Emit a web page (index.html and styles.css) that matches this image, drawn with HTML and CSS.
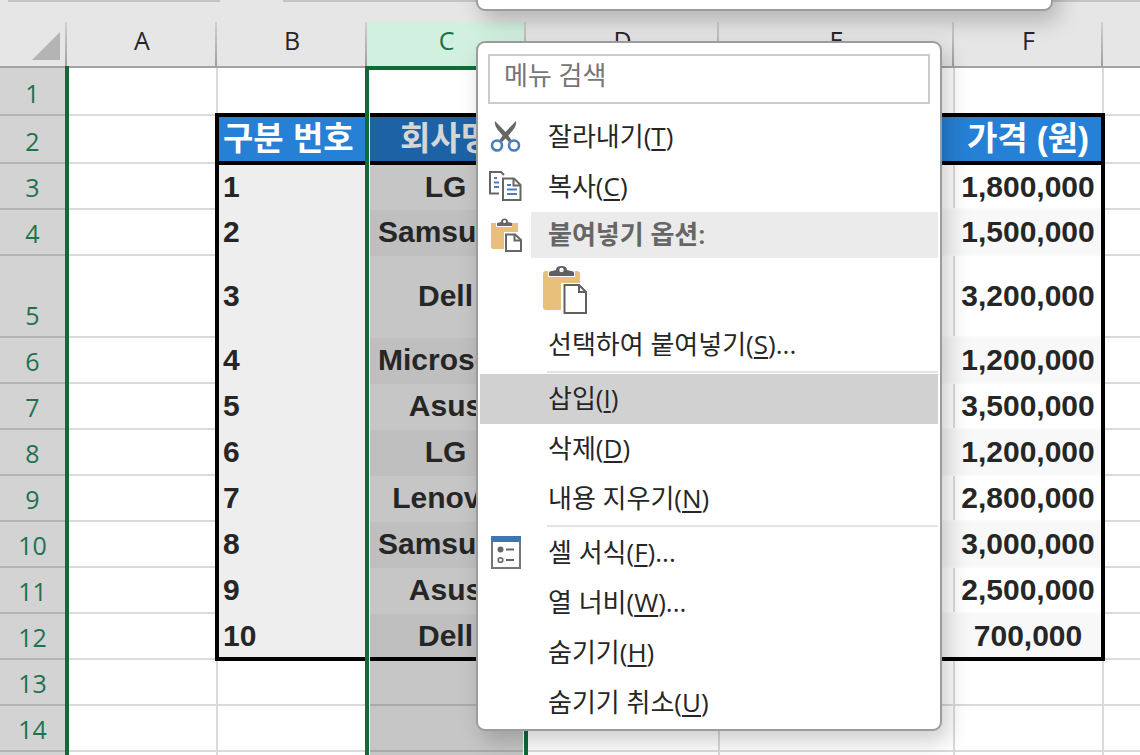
FILE: index.html
```html
<!DOCTYPE html>
<html lang="ko">
<head>
  <meta charset="UTF-8" />
  <meta name="viewport" content="width=device-width, initial-scale=1.0" />
  <title>통합 문서</title>
  <link rel="stylesheet" href="styles.css">
</head>
<body>
  <main class="window">
    <!-- Bottom edge of the name box and the formula bar -->
    <div class="formula-row">
      <div class="name-box"></div>
      <div class="formula-bar"></div>
    </div>

    <!-- Sheet -->
    <table class="sheet">
      <colgroup>
        <col class="col-head">
        <col class="col-a">
        <col class="col-b">
        <col class="col-c">
        <col class="col-d">
        <col class="col-e">
        <col class="col-f">
        <col>
      </colgroup>
      <thead>
        <tr>
          <th class="corner">
            <svg width="28" height="28" viewBox="0 0 28 28"><path d="M28 0V28H0Z" fill="#b4b4b4"/></svg>
          </th>
          <th>A</th>
          <th>B</th>
          <th class="selected">C</th>
          <th>D</th>
          <th>E</th>
          <th>F</th>
          <th></th>
        </tr>
      </thead>
      <tbody>
        <tr class="tall">
          <th>1</th><td></td><td></td>
          <td class="active"><div class="selection"></div></td>
          <td></td><td></td><td></td><td></td>
        </tr>
        <tr class="data title tall">
          <th>2</th><td></td><td>구분 번호</td><td>회사명</td><td></td><td></td><td>가격 (원)</td><td></td>
        </tr>
        <tr class="data">
          <th>3</th><td></td><td>1</td><td>LG</td><td></td><td></td><td>1,800,000</td><td></td>
        </tr>
        <tr class="data band">
          <th>4</th><td></td><td>2</td><td>Samsung</td><td></td><td></td><td>1,500,000</td><td></td>
        </tr>
        <tr class="data double">
          <th>5</th><td></td><td>3</td><td>Dell</td><td></td><td></td><td>3,200,000</td><td></td>
        </tr>
        <tr class="data band">
          <th>6</th><td></td><td>4</td><td>Microsoft</td><td></td><td></td><td>1,200,000</td><td></td>
        </tr>
        <tr class="data">
          <th>7</th><td></td><td>5</td><td>Asus</td><td></td><td></td><td>3,500,000</td><td></td>
        </tr>
        <tr class="data band">
          <th>8</th><td></td><td>6</td><td>LG</td><td></td><td></td><td>1,200,000</td><td></td>
        </tr>
        <tr class="data">
          <th>9</th><td></td><td>7</td><td>Lenovo</td><td></td><td></td><td>2,800,000</td><td></td>
        </tr>
        <tr class="data band">
          <th>10</th><td></td><td>8</td><td>Samsung</td><td></td><td></td><td>3,000,000</td><td></td>
        </tr>
        <tr class="data">
          <th>11</th><td></td><td>9</td><td>Asus</td><td></td><td></td><td>2,500,000</td><td></td>
        </tr>
        <tr class="data band last">
          <th>12</th><td></td><td>10</td><td>Dell</td><td></td><td></td><td>700,000</td><td></td>
        </tr>
        <tr class="empty">
          <th>13</th><td></td><td></td><td></td><td></td><td></td><td></td><td></td>
        </tr>
        <tr class="empty">
          <th>14</th><td></td><td></td><td></td><td></td><td></td><td></td><td></td>
        </tr>
        <tr class="empty">
          <th></th><td></td><td></td><td></td><td></td><td></td><td></td><td></td>
        </tr>
      </tbody>
    </table>

    <!-- Mini toolbar -->
    <div class="mini-toolbar"></div>

    <!-- Context menu -->
    <div class="menu" role="menu">
      <input class="menu-search" type="text" placeholder="메뉴 검색" aria-label="메뉴 검색">

      <button class="item" role="menuitem">
        <svg class="icon" viewBox="0 0 32 32" fill="none">
          <path d="M5 1C4 6 8 10 12 15L19 22L21.500 20L16 12.500Z" fill="#666"/>
          <path d="M26 1C27 6 23 10 19 15L12 22L9.500 20L15 12.500Z" fill="#666"/>
          <circle cx="7" cy="25.500" r="5" stroke="#4a7ebb" stroke-width="2.600"/>
          <circle cx="24" cy="25.500" r="5" stroke="#4a7ebb" stroke-width="2.600"/>
        </svg>
        <span>잘라내기(<u>T</u>)</span>
      </button>

      <button class="item" role="menuitem">
        <svg class="icon" viewBox="0 0 32 32" fill="none">
          <path d="M9 23.500H0V2H11L14 5" stroke="#666" stroke-width="2"/>
          <path d="M4 8H7M4 12.500H9M4 17H9" stroke="#4a7ebb" stroke-width="2"/>
          <path d="M13 8.500H24L30.500 15V30H13Z" fill="#fff" stroke="#666" stroke-width="2"/>
          <path d="M23.500 9V15.500H30" stroke="#666" stroke-width="2"/>
          <path d="M17 15H21M17 19.500H27M17 24H27" stroke="#4a7ebb" stroke-width="2"/>
        </svg>
        <span>복사(<u>C</u>)</span>
      </button>

      <div class="item heading">
        <svg class="icon" viewBox="0 0 32 32" fill="none">
          <path d="M1 5H6V9H22V5H28V14H14V31H3Q1 31 1 29Z" fill="#e9bf7c"/>
          <path d="M7 8V5L11 4Q11 0.500 14.500 0.500T18 4L22 5V8Z" fill="#666"/>
          <circle cx="14.500" cy="3.500" r="1.500" fill="#fff"/>
          <path d="M16 16.500H25L31 22V33H16Z" fill="#fff" stroke="#666" stroke-width="2"/>
          <path d="M24.500 17V22.500H31" stroke="#666" stroke-width="2"/>
        </svg>
        <span>붙여넣기 옵션:</span>
      </div>

      <div class="paste-options">
        <button class="paste" role="menuitem" aria-label="붙여넣기">
          <svg width="46" height="50" viewBox="0 0 46 50" fill="none">
            <path d="M1 9Q1 6 4 6H6V12H33V6H35Q38 6 38 9V18H19V45H4Q1 45 1 42Z" fill="#e9bf7c"/>
            <path d="M7 11V8Q7 6 10 6L14 5Q14 1 19.500 1T25 5L29 6Q32 6 32 8V11Z" fill="#606060"/>
            <circle cx="19.500" cy="5" r="2.200" fill="#fff"/>
            <path d="M22.500 20H37L44 27V48H22.500Z" fill="#fff" stroke="#606060" stroke-width="2"/>
            <path d="M37 20V27H44" stroke="#606060" stroke-width="2"/>
          </svg>
        </button>
      </div>

      <button class="item" role="menuitem"><span>선택하여 붙여넣기(<u>S</u>)...</span></button>
      <hr>
      <button class="item hover" role="menuitem"><span>삽입(<u>I</u>)</span></button>
      <button class="item" role="menuitem"><span>삭제(<u>D</u>)</span></button>
      <button class="item" role="menuitem"><span>내용 지우기(<u>N</u>)</span></button>
      <hr>
      <button class="item" role="menuitem">
        <svg class="icon" viewBox="0 0 32 32" fill="none">
          <rect x="2" y="1" width="28" height="31" fill="#fff" stroke="#777" stroke-width="2"/>
          <path d="M1 0H31V6H1Z" fill="#3f74b5"/>
          <circle cx="10.500" cy="13.500" r="3" fill="#666"/>
          <circle cx="10.500" cy="24" r="2.300" stroke="#666" stroke-width="1.600"/>
          <path d="M16 13.500H24M16 24H24" stroke="#666" stroke-width="2"/>
        </svg>
        <span>셀 서식(<u>F</u>)...</span>
      </button>
      <button class="item" role="menuitem"><span>열 너비(<u>W</u>)...</span></button>
      <button class="item" role="menuitem"><span>숨기기(<u>H</u>)</span></button>
      <button class="item" role="menuitem"><span>숨기기 취소(<u>U</u>)</span></button>
    </div>
  </main>
</body>
</html>
```

FILE: styles.css
```css
/* Root Variables */
:root {
  --chrome: #e6e6e6;
  --grid: #dadada;
  --green: #0f6b38;
  --blue: #2680d6;
  --blue-dark: #1e62a6;
  --menu-border: #9c9c9c;
  --ui-font: "Open Sans", "Noto Sans CJK KR", sans-serif;
  --cell-font: "Liberation Sans", "Noto Sans CJK KR", sans-serif;
}

* {
  margin: 0;
  padding: 0;
  box-sizing: border-box;
}
body {
  font-family: var(--ui-font);
  background: #fff;
  color: #262626;
}

.window {
  position: relative;
  height: 100vh;
  overflow: hidden;
}

/* Formula row */
.formula-row {
  display: flex;
  gap: 63px;
  height: 22px;
  padding-left: 8px;
  background: var(--chrome);
}
.name-box,
.formula-bar {
  height: 2px;
  background: #c4c4c4;
}
.name-box {
  width: 212px;
}
.formula-bar {
  flex: 1;
}

/* Sheet */
.sheet {
  width: 100%;
  table-layout: fixed;
  border-collapse: collapse;
}
.col-head { width: 67px; }
.col-a { width: 150px; }
.col-b { width: 150px; }
.col-c { width: 159px; }
.col-d { width: 193px; }
.col-e { width: 235px; }
.col-f { width: 149px; }

.sheet tr {
  height: 46px;
}
.sheet thead tr {
  height: 45px;
}
.sheet tr.tall {
  height: 48px;
}
.sheet tr.double {
  height: 82px;
}
.sheet th {
  font-size: 25px;
  font-weight: 400;
  line-height: 36px;
}
.sheet thead th {
  padding-bottom: 8px;
  border-bottom: 2px solid #a3a3a3;
  background: linear-gradient(#d0d0d0, #9f9f9f) right / 2px 100% no-repeat var(--chrome);
}
.sheet thead th:last-child {
  background: var(--chrome);
}
.sheet thead th.selected {
  background-color: #d2f0e0;
  color: #1d7048;
}
.sheet thead th.corner {
  padding: 0 7px 6px 0;
  text-align: right;
  vertical-align: bottom;
}
.corner svg {
  display: block;
  margin-left: auto;
}
.sheet tbody th {
  border-right: 4px solid var(--green);
  border-bottom: 2px solid #b4b4b4;
  background: #d3d3d3;
  color: #1f7250;
  line-height: 42px;
  vertical-align: bottom;
}
.sheet td {
  border: 2px solid var(--grid);
  font-family: var(--cell-font);
  font-size: 30px;
  font-weight: 700;
  line-height: 40px;
  text-align: center;
  white-space: nowrap;
}
.sheet td:last-child {
  border-right: none;
}

/* Filled block B2:F12 */
.data td:nth-child(3) {
  padding-left: 4px;
  border-color: #eee;
  border-left: 4px solid #000;
  background: #eee;
  text-align: left;
}
.data td:nth-child(4) {
  padding-right: 2px;
  border-color: #c6c6c6;
  background: #c6c6c6;
}
.data td:nth-child(5),
.data td:nth-child(6),
.data td:nth-child(7) {
  border-bottom-color: #fafafa;
}
.data td:nth-child(7) {
  border-right: 4px solid #000;
}
.band td:nth-child(4) {
  border-color: #bfbfbf;
  background: #bfbfbf;
}
.band td:nth-child(5),
.band td:nth-child(6),
.band td:nth-child(7) {
  border-left-color: #f8f8f8;
  background: #f8f8f8;
}
.band td:nth-child(5),
.band td:nth-child(6) {
  border-right-color: #f8f8f8;
}
.title td:nth-child(n+3):nth-child(-n+7) {
  border-top: 4px solid #000;
  border-bottom: 4px solid #000;
  border-right-color: var(--blue);
  background: var(--blue);
  color: #fff;
  font-size: 33px;
}
.title td:nth-child(n+4):nth-child(-n+4) {
  background: var(--blue-dark);
  color: #d6d6d6;
}
.title td:nth-child(n+3):nth-child(-n+4) {
  border-right-color: var(--blue-dark);
}
.title td:nth-child(n+7):nth-child(-n+7) {
  border-right-color: #000;
}
.last td:nth-child(n+3):nth-child(-n+7) {
  border-bottom: 4px solid #000;
}
.empty td:nth-child(4) {
  border-color: #aaa;
  background: #c6c6c6;
}

/* Outline of the selected column */
.active {
  position: relative;
}
.selection {
  position: absolute;
  top: -2px;
  left: -3px;
  right: -3px;
  height: 100vh;
  border: 4px solid var(--green);
  box-shadow: inset 0 0 0 1px #fff;
}

/* Mini toolbar */
.mini-toolbar {
  position: absolute;
  top: -40px;
  left: 476px;
  width: 577px;
  height: 51px;
  border: 2px solid var(--menu-border);
  border-radius: 9px;
  background: #fff;
  box-shadow: 6px 10px 22px rgba(0, 0, 0, 0.22);
}

/* Context menu */
.menu {
  position: absolute;
  top: 41px;
  left: 476px;
  width: 466px;
  padding: 11px 2px 1px;
  border: 2px solid var(--menu-border);
  border-radius: 9px;
  background: #fff;
  box-shadow: 6px 10px 22px rgba(0, 0, 0, 0.2);
}
.menu-search {
  display: block;
  width: calc(100% - 16px);
  height: 50px;
  margin: 0 8px 8px;
  padding: 0 14px 8px;
  border: 2px solid #ccc;
  background: #fff;
  font-family: var(--ui-font);
  font-size: 26px;
}
.menu-search::placeholder {
  color: #767676;
  opacity: 1;
}
.item {
  display: flex;
  align-items: center;
  width: 100%;
  height: 50px;
  padding: 0 0 2px 68px;
  border: none;
  background: none;
  color: #262626;
  font-family: var(--ui-font);
  font-size: 26px;
  line-height: 36px;
  text-align: left;
  white-space: nowrap;
}
.item u {
  text-underline-offset: 3px;
}
.item.hover {
  background: #d1d1d1;
}
.icon {
  flex: none;
  width: 32px;
  height: 32px;
  margin-left: -58px;
  margin-right: 26px;
  overflow: visible;
}
.heading {
  height: 46px;
  background: linear-gradient(#ebebeb, #ebebeb) right / calc(100% - 51px) 100% no-repeat;
  color: #666;
  font-weight: 600;
}
.paste-options {
  display: flex;
  height: 62px;
  padding: 7px 0 0 62px;
}
.paste {
  width: 46px;
  height: 50px;
  border: none;
  background: none;
}
.menu hr {
  height: 4px;
  margin-left: 67px;
  border: 1px solid #fff;
  border-left: none;
  border-right: none;
  background: #e4e4e4;
}
```
